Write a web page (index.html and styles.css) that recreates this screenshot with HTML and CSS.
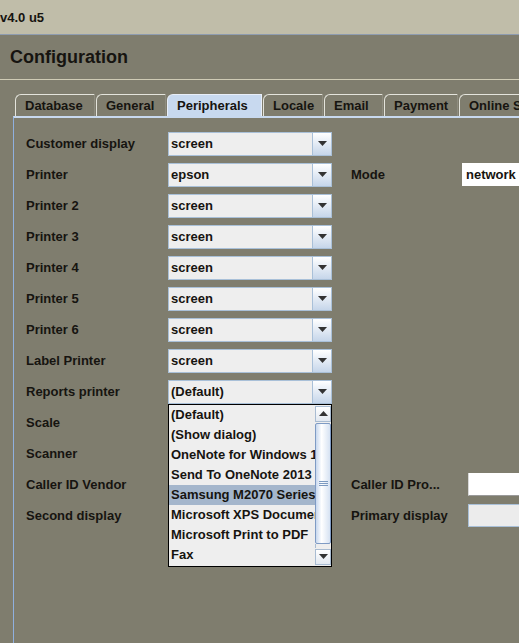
FILE: index.html
```html
<!DOCTYPE html>
<html>
<head>
<meta charset="utf-8">
<link rel="stylesheet" href="styles.css">
</head>
<body>
<div class="titlebar">v4.0 u5</div>
<div class="header">Configuration</div>
<div class="tabs">
  <div class="tab w-db">Database</div>
  <div class="tab w-gen">General</div>
  <div class="tab sel w-per">Peripherals</div>
  <div class="tab w-loc">Locale</div>
  <div class="tab w-em">Email</div>
  <div class="tab w-pay">Payment</div>
  <div class="tab w-on">Online Shop</div>
</div>
<div class="panel">
  <div class="row"><div class="label">Customer display</div><div class="combo"><div class="val">screen</div><div class="btn"><svg width="9" height="5" viewBox="0 0 9 5"><path d="M0 0H9L4.5 5Z" fill="#333"/></svg></div></div></div>
  <div class="row"><div class="label">Printer</div><div class="combo"><div class="val">epson</div><div class="btn"><svg width="9" height="5" viewBox="0 0 9 5"><path d="M0 0H9L4.5 5Z" fill="#333"/></svg></div></div>
    <div class="label2 l-mode">Mode</div><div class="field white">network</div></div>
  <div class="row"><div class="label">Printer 2</div><div class="combo"><div class="val">screen</div><div class="btn"><svg width="9" height="5" viewBox="0 0 9 5"><path d="M0 0H9L4.5 5Z" fill="#333"/></svg></div></div></div>
  <div class="row"><div class="label">Printer 3</div><div class="combo"><div class="val">screen</div><div class="btn"><svg width="9" height="5" viewBox="0 0 9 5"><path d="M0 0H9L4.5 5Z" fill="#333"/></svg></div></div></div>
  <div class="row"><div class="label">Printer 4</div><div class="combo"><div class="val">screen</div><div class="btn"><svg width="9" height="5" viewBox="0 0 9 5"><path d="M0 0H9L4.5 5Z" fill="#333"/></svg></div></div></div>
  <div class="row"><div class="label">Printer 5</div><div class="combo"><div class="val">screen</div><div class="btn"><svg width="9" height="5" viewBox="0 0 9 5"><path d="M0 0H9L4.5 5Z" fill="#333"/></svg></div></div></div>
  <div class="row"><div class="label">Printer 6</div><div class="combo"><div class="val">screen</div><div class="btn"><svg width="9" height="5" viewBox="0 0 9 5"><path d="M0 0H9L4.5 5Z" fill="#333"/></svg></div></div></div>
  <div class="row"><div class="label">Label Printer</div><div class="combo"><div class="val">screen</div><div class="btn"><svg width="9" height="5" viewBox="0 0 9 5"><path d="M0 0H9L4.5 5Z" fill="#333"/></svg></div></div></div>
  <div class="row top"><div class="label">Reports printer</div><div class="combo"><div class="val">(Default)</div><div class="btn"><svg width="9" height="5" viewBox="0 0 9 5"><path d="M0 0H9L4.5 5Z" fill="#333"/></svg></div>
      <div class="popup">
        <div class="list">
          <div class="item">(Default)</div>
          <div class="item">(Show dialog)</div>
          <div class="item">OneNote for Windows 10</div>
          <div class="item">Send To OneNote 2013</div>
          <div class="item selected">Samsung M2070 Series</div>
          <div class="item">Microsoft XPS Document Writer</div>
          <div class="item">Microsoft Print to PDF</div>
          <div class="item">Fax</div>
        </div>
        <div class="sbar">
          <div class="sbtn"><svg width="9" height="5" viewBox="0 0 9 5"><path d="M0 5H9L4.5 0Z" fill="#333"/></svg></div>
          <div class="thumb"><svg width="9" height="5" viewBox="0 0 9 5"><path d="M0 0.5H9M0 2.5H9M0 4.5H9" stroke="#7d9ac0" stroke-width="1"/></svg></div>
          <div class="track"></div>
          <div class="sbtn"><svg width="9" height="5" viewBox="0 0 9 5"><path d="M0 0H9L4.5 5Z" fill="#333"/></svg></div>
        </div>
      </div>
    </div></div>
  <div class="row"><div class="label">Scale</div><div class="combo"><div class="val"></div><div class="btn"></div></div></div>
  <div class="row"><div class="label">Scanner</div><div class="combo"><div class="val"></div><div class="btn"></div></div></div>
  <div class="row"><div class="label">Caller ID Vendor</div><div class="combo"><div class="val"></div><div class="btn"></div></div>
    <div class="label2 l-cid">Caller ID Pro...</div><div class="field white under"></div></div>
  <div class="row"><div class="label">Second display</div><div class="combo"><div class="val"></div><div class="btn"></div></div>
    <div class="label2 l-cid">Primary display</div><div class="field grey"></div></div>
</div>
</body>
</html>
```
FILE: styles.css
```css
html, body {
  margin: 0;
  padding: 0;
  height: 100%;
  overflow: hidden;
}
body {
  background: #7f7d6e;
  font-family: "Liberation Sans", Arial, sans-serif;
  font-weight: bold;
  font-size: 13px;
  color: #161410;
  width: 519px;
  display: flex;
  flex-direction: column;
}
.titlebar {
  flex: none;
  height: 33px;
  padding-top: 1px;
  line-height: 33px;
  background: #c0bda9;
  border-bottom: 1px solid #8e9cb0;
  font-size: 13px;
}
.header {
  flex: none;
  height: 44px;
  line-height: 44px;
  padding-left: 10px;
  font-size: 18px;
  border-bottom: 1px solid #cfcbb5;
}
.tabs {
  flex: none;
  display: flex;
  margin-top: 14px;
  padding-left: 15px;
  height: 22px;
  white-space: nowrap;
  overflow: hidden;
}
.tab {
  flex: none;
  box-sizing: border-box;
  height: 22px;
  line-height: 21px;
  padding-left: 9px;
  border-top: 1px solid #e4e4dc;
  border-left: 1px solid #e4e4dc;
  border-right: 1px solid #8f8d80;
  border-top-left-radius: 6px;
  margin-right: 1px;
  overflow: hidden;
}
.tab.sel {
  background: #c8d9ef;
  border-color: #e8eef8;
}
.w-db { width: 80px; }
.w-gen { width: 70px; }
.w-per { width: 95px; }
.w-loc { width: 60px; }
.w-em { width: 59px; }
.w-pay { width: 74px; }
.w-on { width: 80px; }
.panel {
  flex: 1;
  min-height: 0;
  margin-left: 13px;
  border-left: 1px solid #8fb0df;
  border-top: 2px solid #c8d9ef;
  padding-top: 10px;
  padding-left: 12px;
}
.row {
  display: flex;
  align-items: center;
  height: 31px;
  position: relative;
}
.row.top { z-index: 2; }
.label {
  width: 142px;
  flex: none;
}
.combo {
  position: relative;
  display: flex;
  width: 164px;
  height: 24px;
  box-sizing: border-box;
  flex: none;
}
.val {
  flex: 1;
  background: #eeeeee;
  border: 1px solid #a9c0d8;
  padding-left: 2px;
  line-height: 22px;
}
.btn {
  width: 18px;
  border: 1px solid #a9c0d8;
  border-left: none;
  background: linear-gradient(#ffffff, #c6d6ea);
  display: flex;
  align-items: center;
  justify-content: center;
}
.label2 {
  flex: none;
  margin-left: 19px;
  white-space: nowrap;
}
.l-mode { width: 111px; }
.l-cid { width: 117px; }
.field {
  flex: 1;
  height: 23px;
  box-sizing: border-box;
  padding-left: 4px;
  line-height: 23px;
}
.white { background: #ffffff; }
.under { border-bottom: 1px solid #9a9a9a; border-left: 1px solid #d8d8d8; }
.grey { background: #ececec; border: 1px solid #a9c0d8; border-right: none; }
.popup {
  position: absolute;
  left: 0;
  top: 24px;
  width: 164px;
  height: 163px;
  box-sizing: border-box;
  border: 1px solid #000;
  background: #eeeeee;
  display: flex;
}
.list {
  flex: 1;
  min-width: 0;
  overflow: hidden;
}
.item {
  height: 20px;
  line-height: 20px;
  padding-left: 2px;
  white-space: nowrap;
  overflow: hidden;
}
.item.selected {
  background: #a4b6cc;
}
.sbar {
  width: 16px;
  flex: none;
  display: flex;
  flex-direction: column;
  background: #eeeeee;
}
.sbtn {
  height: 16px;
  box-sizing: border-box;
  border: 1px solid #a9bcd2;
  background: linear-gradient(#ffffff, #e2e8f0);
  display: flex;
  align-items: center;
  justify-content: center;
  margin: 1px 0;
}
.thumb {
  height: 121px;
  box-sizing: border-box;
  border: 1px solid #7f9bc4;
  border-radius: 2px;
  background: linear-gradient(90deg, #c8d8ee, #ffffff 40%, #d6e2f2);
  display: flex;
  align-items: center;
  justify-content: center;
}
.track {
  flex: 1;
  border-left: 1px solid #a9bcd2;
}
```
